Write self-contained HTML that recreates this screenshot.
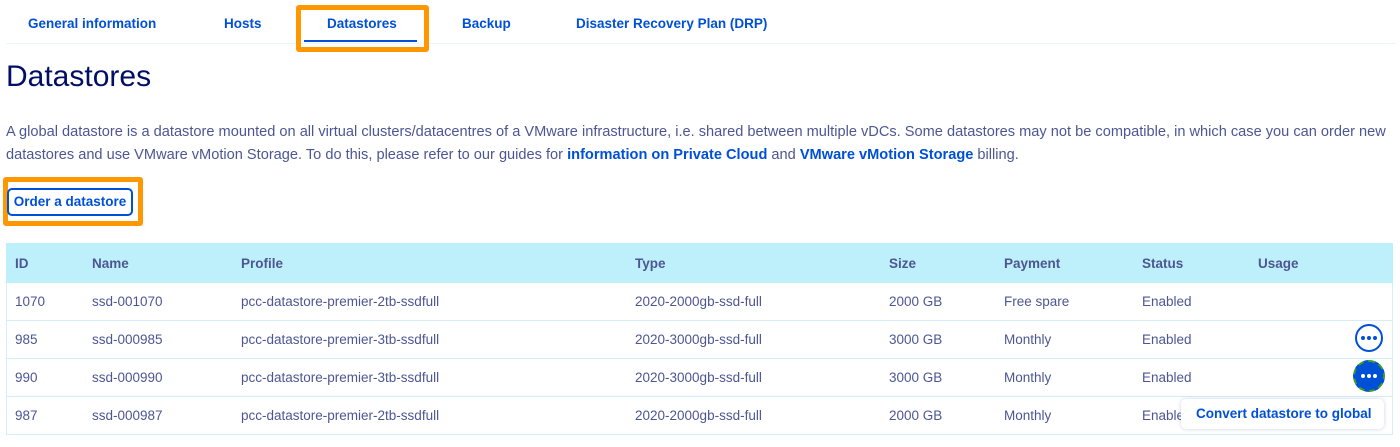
<!DOCTYPE html>
<html><head><style>
*{margin:0;padding:0;box-sizing:border-box}
body{width:1400px;height:447px;background:#fff;font-family:"Liberation Sans",sans-serif;position:relative;overflow:hidden;color:#4d5693}
.a{position:absolute;white-space:nowrap}
.tab{font-size:13.5px;font-weight:bold;color:#0050d7;top:16px}
.p{font-size:14.6px;left:6px;color:#4d5693}
.p b{color:#0050d7}
.row{position:absolute;left:6px;width:1387px;border-bottom:1px solid #d3eefa;border-left:1px solid #d3eefa;border-right:1px solid #d3eefa}
.c{position:absolute;font-size:13.5px;top:11px}
.h .c{font-weight:bold;top:13px}
.dot{position:absolute;width:28px;height:28px;border-radius:50%;display:flex;align-items:center;justify-content:center;gap:2px}
.dot i{width:4px;height:4px;border-radius:50%;display:block}
</style></head><body>
<div class="a tab" style="left:28px">General information</div>
<div class="a tab" style="left:224px">Hosts</div>
<div class="a tab" style="left:327px">Datastores</div>
<div class="a tab" style="left:462px">Backup</div>
<div class="a tab" style="left:576px">Disaster Recovery Plan (DRP)</div>
<div class="a" style="left:6px;top:43px;width:1390px;height:1px;background:#eef4fb"></div>
<div class="a" style="left:304px;top:40px;width:113px;height:2px;background:#0050d7"></div>
<div class="a" style="left:296px;top:5px;width:133px;height:47px;border:5px solid #ff9800;border-radius:3px"></div>
<div class="a" style="left:6px;top:60px;font-size:30px;color:#000e66">Datastores</div>
<div class="a p" style="top:124px">A global datastore is a datastore mounted on all virtual clusters/datacentres of a VMware infrastructure, i.e. shared between multiple vDCs. Some datastores may not be compatible, in which case you can order new</div>
<div class="a p" style="top:147px">datastores and use VMware vMotion Storage. To do this, please refer to our guides for <b>information on Private Cloud</b> and <b>VMware vMotion Storage</b> billing.</div>
<div class="a" style="left:3px;top:177px;width:140px;height:49px;border:5px solid #ff9800;border-radius:3px"></div>
<div class="a" style="left:7px;top:188px;width:126px;height:28px;border:2px solid #0050d7;border-radius:5px;font-size:13.5px;font-weight:bold;color:#0050d7;text-align:center;line-height:24px">Order a datastore</div>

<div class="row h" style="top:243px;height:40px;background:#bef0fc;border-color:#bef0fc">
<div class="c" style="left:8px">ID</div><div class="c" style="left:85px">Name</div><div class="c" style="left:234px">Profile</div><div class="c" style="left:628px">Type</div><div class="c" style="left:882px">Size</div><div class="c" style="left:997px">Payment</div><div class="c" style="left:1135px">Status</div><div class="c" style="left:1251px">Usage</div></div>
<div class="row" style="top:283px;height:38px">
<div class="c" style="left:8px">1070</div><div class="c" style="left:85px">ssd-001070</div><div class="c" style="left:234px">pcc-datastore-premier-2tb-ssdfull</div><div class="c" style="left:628px">2020-2000gb-ssd-full</div><div class="c" style="left:882px">2000 GB</div><div class="c" style="left:997px">Free spare</div><div class="c" style="left:1135px">Enabled</div></div>
<div class="row" style="top:321px;height:38px">
<div class="c" style="left:8px">985</div><div class="c" style="left:85px">ssd-000985</div><div class="c" style="left:234px">pcc-datastore-premier-3tb-ssdfull</div><div class="c" style="left:628px">2020-3000gb-ssd-full</div><div class="c" style="left:882px">3000 GB</div><div class="c" style="left:997px">Monthly</div><div class="c" style="left:1135px">Enabled</div>
<div class="dot" style="left:1348px;top:3px;border:2px solid #0050d7;background:#fff"><i style="background:#0050d7"></i><i style="background:#0050d7"></i><i style="background:#0050d7"></i></div></div>
<div class="row" style="top:359px;height:38px">
<div class="c" style="left:8px">990</div><div class="c" style="left:85px">ssd-000990</div><div class="c" style="left:234px">pcc-datastore-premier-3tb-ssdfull</div><div class="c" style="left:628px">2020-3000gb-ssd-full</div><div class="c" style="left:882px">3000 GB</div><div class="c" style="left:997px">Monthly</div><div class="c" style="left:1135px">Enabled</div>
<div class="dot" style="left:1346px;top:1px;width:32px;height:32px;border:2px dashed #3a9a2a;background:#0050d7"><i style="background:#fff"></i><i style="background:#fff"></i><i style="background:#fff"></i></div></div>
<div class="row" style="top:397px;height:38px">
<div class="c" style="left:8px">987</div><div class="c" style="left:85px">ssd-000987</div><div class="c" style="left:234px">pcc-datastore-premier-2tb-ssdfull</div><div class="c" style="left:628px">2020-2000gb-ssd-full</div><div class="c" style="left:882px">2000 GB</div><div class="c" style="left:997px">Monthly</div><div class="c" style="left:1135px">Enabled</div></div>
<div class="a" style="left:1181px;top:399px;width:203px;height:30px;background:#fff;border-radius:5px;box-shadow:0 0 4px rgba(0,40,120,.2);font-size:13.5px;font-weight:bold;color:#0050d7;line-height:30px;padding-left:15px">Convert datastore to global</div>
</body></html>
